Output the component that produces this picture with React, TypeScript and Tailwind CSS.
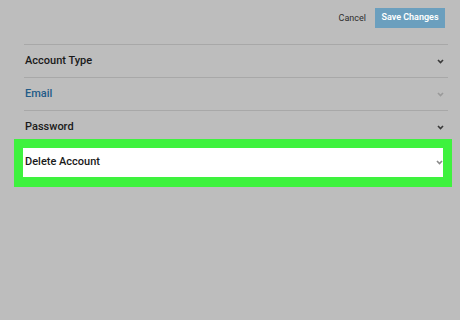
import React from "react"

const rows = [
  { label: "Account Type", color: "text-[#1a1a1a]", chevron: "#3a3a3a" },
  { label: "Email", color: "text-[#235b88]", chevron: "#9a9a9a" },
  { label: "Password", color: "text-[#1a1a1a]", chevron: "#3a3a3a" },
]

function Chevron({ color }: { color: string }) {
  return (
    <svg width="7" height="5" viewBox="0 0 7 5" className="shrink-0">
      <polyline points="1,1 3.5,3.6 6,1" fill="none" stroke={color} strokeWidth="1.6" />
    </svg>
  )
}

export default function App() {
  return (
    <div
      className="w-[460px] h-[320px] bg-[#bdbdbd] overflow-hidden"
      style={{ fontFamily: "Roboto, 'Noto Sans', sans-serif" }}
    >
      {/* top actions */}
      <div className="h-[44px] flex justify-end items-start pt-[8px] pr-[15px] gap-[9px]">
        <span className="text-[9px] leading-[20px] text-[#2e2e2e]">Cancel</span>
        <button className="w-[70px] h-[20px] bg-[#6b9fbe] text-white text-[9px] font-semibold">
          Save Changes
        </button>
      </div>

      {/* settings list */}
      <div className="ml-[24px] mr-[12px] border-t border-[#a8a8a8]">
        {rows.map((r, i) => (
          <div
            key={r.label}
            className={`h-[33px] flex items-center justify-between pl-[1px] pr-[4px] ${
              i < rows.length - 1 ? "border-b border-[#a8a8a8]" : ""
            }`}
          >
            <span className={`text-[11px] font-medium ${r.color}`}>{r.label}</span>
            <Chevron color={r.chevron} />
          </div>
        ))}

        {/* highlighted row */}
        <div className="-mt-[5px] -ml-[10px] -mr-[4px] border-[9px] border-b-[10px] border-[#3ef23e]">
          <div className="h-[29px] bg-white flex items-center justify-between pl-[2px]">
            <span className="text-[11px] font-medium text-[#1a1a1a]">Delete Account</span>
            <Chevron color="#8a8a8a" />
          </div>
        </div>
      </div>
    </div>
  )
}
